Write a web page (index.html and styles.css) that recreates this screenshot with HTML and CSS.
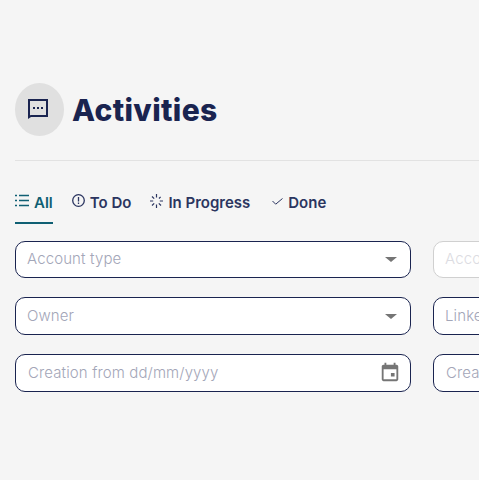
FILE: index.html
```html
<!DOCTYPE html>
<html lang="en">

<head>
    <meta charset="UTF-8">
    <meta name="viewport" content="width=device-width, initial-scale=1.0">
    <title>Activities</title>
    <link rel="stylesheet" href="styles.css">
</head>

<body>
    <div class="page">
        <header class="page-header">
            <div class="header-icon">
                <svg width="20" height="20" viewBox="0 0 20 20" fill="#1a2450">
                    <path d="M0 0h20v18H3l-3 2zM2 2v14.6L2.6 16H18V2z"/>
                    <rect x="5" y="8" width="2" height="2"/>
                    <rect x="9" y="8" width="2" height="2"/>
                    <rect x="13" y="8" width="2" height="2"/>
                </svg>
            </div>
            <h1>Activities</h1>
        </header>

        <nav class="tabs">
            <a class="tab active">
                <svg width="14" height="13" viewBox="0 0 14 13" fill="none" stroke="currentColor" stroke-width="1.3">
                    <path d="M4 1.5h10M4 6.5h10M4 11.5h10"/>
                    <path d="M0 1.5h2M0 6.5h2M0 11.5h2"/>
                </svg>
                All
            </a>
            <a class="tab">
                <svg width="13" height="13" viewBox="0 0 13 13" fill="none" stroke="currentColor" stroke-width="1.3">
                    <circle cx="6.5" cy="6.5" r="5.8"/>
                    <path d="M6.5 3v4.5M6.5 8.6v1.4"/>
                </svg>
                To Do
            </a>
            <a class="tab">
                <svg width="13" height="14" viewBox="0 0 13 14" fill="none" stroke="currentColor" stroke-width="1.2">
                    <path d="M6.5 0v3.5M6.5 10.5V14M0 7h3.2M9.8 7H13M2 2.5l2.2 2.2M8.8 9.3l2.2 2.2M2 11.5l2.2-2.2M9 4.5l1.6-1.6"/>
                </svg>
                In Progress
            </a>
            <a class="tab tab-done">
                <svg class="check" width="11" height="7" viewBox="0 0 11 7" fill="none" stroke="currentColor" stroke-width="1">
                    <path d="M0.5 3l3.2 3.2L10.5 0.5"/>
                </svg>
                Done
            </a>
        </nav>

        <div class="filters">
            <div class="field">
                <span class="placeholder">Account type</span>
                <span class="caret"></span>
            </div>
            <div class="field disabled">
                <span class="placeholder">Account</span>
            </div>
            <div class="field tall">
                <span class="placeholder">Owner</span>
                <span class="caret"></span>
            </div>
            <div class="field tall">
                <span class="placeholder">Linked to</span>
            </div>
            <div class="field tall date">
                <span class="placeholder">Creation from dd/mm/yyyy</span>
                <svg class="calendar" width="22" height="22" viewBox="0 0 24 24" fill="#757575">
                    <path d="M19 4h-1V2h-2v2H8V2H6v2H5c-1.1 0-2 .9-2 2v14c0 1.1.9 2 2 2h14c1.1 0 2-.9 2-2V6c0-1.1-.9-2-2-2zm0 16H5V9h14v11zm-6-7h4v4h-4z"/>
                </svg>
            </div>
            <div class="field tall date">
                <span class="placeholder">Creation to dd/mm/yyyy</span>
            </div>
        </div>
    </div>
</body>

</html>
```

FILE: styles.css
```css
html,
body {
    height: 100%;
}

body {
    margin: 0;
    background-color: #f5f5f5;
    font-family: Inter, "Liberation Sans", sans-serif;
    overflow: hidden;
}

.page {
    width: 900px;
    padding: 83px 0 0 15px;
    box-sizing: border-box;
}

.page-header {
    display: flex;
    align-items: center;
    gap: 8px;
    padding-bottom: 24px;
    width: 464px;
    border-bottom: 1px solid #e2e2e2;
}

.header-icon {
    width: 49px;
    height: 53px;
    padding: 0 3px 2px 0;
    box-sizing: border-box;
    border-radius: 50%;
    background-color: #e0e0e0;
    display: flex;
    align-items: center;
    justify-content: center;
}

h1 {
    margin: 0;
    font-size: 30px;
    font-weight: 800;
    letter-spacing: 0.35px;
    color: #1a2450;
}

.tabs {
    display: flex;
    gap: 19px;
    margin-top: 30px;
}

.tab {
    display: flex;
    align-items: flex-start;
    gap: 5px;
    height: 33px;
    box-sizing: border-box;
    font-size: 15px;
    font-weight: 600;
    line-height: 24px;
    color: #2b3560;
}

.tab svg {
    margin-top: 3px;
}

.tab svg.check {
    margin-top: 7px;
}

.tab.active {
    color: #0f5f73;
    border-bottom: 2px solid #0f5f73;
}

.tab-done {
    margin-left: 3px;
}

.filters {
    display: grid;
    grid-template-columns: 396px 396px;
    column-gap: 22px;
    row-gap: 19px;
    margin-top: 17px;
}

.field {
    display: flex;
    align-items: center;
    justify-content: space-between;
    height: 37px;
    box-sizing: border-box;
    padding: 0 13px 2px 11px;
    background-color: #fff;
    border: 1px solid #1a2450;
    border-radius: 10px;
}

.field.tall {
    height: 38px;
}

.field.disabled {
    border-color: #d0d0d0;
}

.field.disabled .placeholder {
    color: #dcdce2;
}

.field.date {
    padding-left: 12px;
    padding-right: 9px;
}

.placeholder {
    font-size: 15px;
    font-weight: 300;
    letter-spacing: 0.12px;
    color: #a3a6b8;
}

.caret {
    width: 0;
    height: 0;
    margin-top: 2px;
    border-left: 6px solid transparent;
    border-right: 6px solid transparent;
    border-top: 5px solid #757575;
}
```
